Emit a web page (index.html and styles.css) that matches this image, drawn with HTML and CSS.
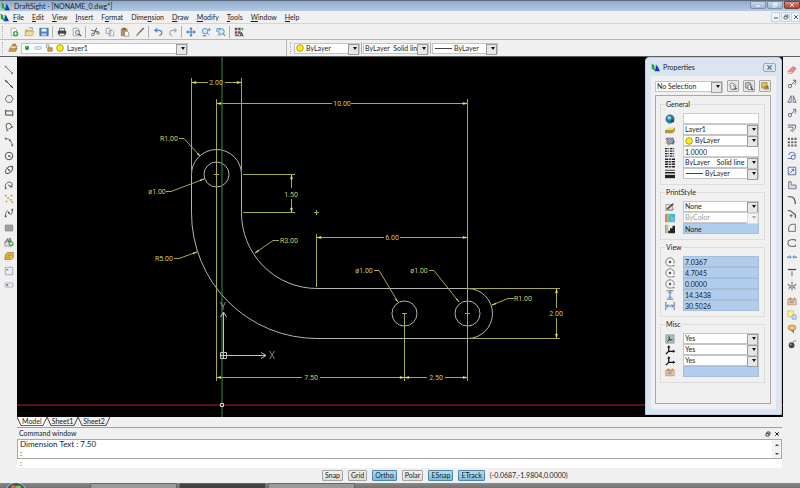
FILE: index.html
```html
<!DOCTYPE html>
<html lang="en">
<head>
<meta charset="utf-8">
<title>DraftSight - [NONAME_0.dwg*]</title>
<link rel="stylesheet" href="styles.css">
</head>
<body>
<svg class="defs" aria-hidden="true">
  <symbol id="logo" viewBox="0 0 12 12"><path d="M1 2l5 1v7l-5-2z" fill="#19c22a"/><path d="M4 1l4 10-3-1z" fill="#fff"/><path d="M7.500 2L12 11H5z" fill="#1438c4"/><path d="M1 1l5 10" stroke="#0a8418" fill="none"/></symbol>
  <symbol id="new" viewBox="0 0 12 12"><path d="M2.500 1.500h5l2 2v7h-7z" fill="#fff" stroke="#aaa"/><circle cx="8" cy="8" r="3.200" fill="#33a544"/><path d="M8 6v4M6 8h4" stroke="#fff"/></symbol>
  <symbol id="open" viewBox="0 0 12 12"><path d="M1 3h4l1 1h4v6H1z" fill="#d8b66a"/><path d="M3 5h9l-2 5.500H1z" fill="#f1db9c" stroke="#b28f43" stroke-width=".6"/><path d="M6 1h4v3" stroke="#6aa36c" fill="none"/></symbol>
  <symbol id="save" viewBox="0 0 12 12"><path d="M1 1.500h10v9H1z" fill="#4c84b8" stroke="#2e5c88" stroke-width=".8"/><path d="M3 2h6v3.500H3z" fill="#e9f2fa"/><path d="M3 7.500h6v3H3z" fill="#b9cfe2"/></symbol>
  <symbol id="print" viewBox="0 0 12 12"><path d="M3 1.500h6V5H3z" fill="#eee" stroke="#555"/><rect x="1" y="4.500" width="10" height="4.500" rx="1" fill="#444"/><path d="M3 7.500h6v3H3z" fill="#fff" stroke="#555" stroke-width=".8"/></symbol>
  <symbol id="preview" viewBox="0 0 12 12"><path d="M1.500 1.500h5l2 2v7h-7z" fill="#fff" stroke="#999"/><circle cx="6.500" cy="6.500" r="2.500" fill="#dde8ef" stroke="#666"/><path d="M8.500 8.500l2.500 2.500" stroke="#444" stroke-width="1.400"/></symbol>
  <symbol id="cut" viewBox="0 0 12 12"><path d="M8 1L5 8M1.500 4L10 6" stroke="#666" stroke-width="1.300"/><circle cx="3.500" cy="9" r="1.600" fill="none" stroke="#8b7544" stroke-width="1.200"/><circle cx="9.700" cy="7.200" r="1.500" fill="none" stroke="#8b7544" stroke-width="1.200"/></symbol>
  <symbol id="copy" viewBox="0 0 12 12"><path d="M1.500 1.500h4l1.500 1.500v5h-5.500zM5 4h4l1.500 1.500v5H5z" fill="#f7f7f7" stroke="#8c8c8c" stroke-width=".9"/></symbol>
  <symbol id="paste" viewBox="0 0 12 12"><path d="M1 2h8v9H1z" fill="#b98f4c"/><path d="M3 1h4v2H3z" fill="#665533"/><path d="M5.500 5h3l2 2v4h-5z" fill="#fff" stroke="#777" stroke-width=".8"/></symbol>
  <symbol id="brush" viewBox="0 0 12 12"><path d="M10.500 1L5 7" stroke="#6f5735" stroke-width="1.600"/><path d="M5.500 6L2 10.500" stroke="#a7946f" stroke-width="2.200"/></symbol>
  <symbol id="undo" viewBox="0 0 12 12"><path d="M3 4h4.500a3 3 0 0 1 0 6" fill="none" stroke="#4d87bf" stroke-width="1.500"/><path d="M5 1L1 4l4 3z" fill="#4d87bf"/></symbol>
  <symbol id="redo" viewBox="0 0 12 12"><path d="M9 4H5a3 3 0 0 0 0 6" fill="none" stroke="#aaa" stroke-width="1.300"/><path d="M7.500 1l3.500 3-3.500 3z" fill="#aaa"/></symbol>
  <symbol id="pan" viewBox="0 0 12 12"><path d="M6 2v8M2 6h8" stroke="#3d7ab5" stroke-width="1.200"/><path d="M6 0l2 3H4zM6 12l2-3H4zM0 6l3-2v4zM12 6L9 4v4z" fill="#3d7ab5"/></symbol>
  <symbol id="zoomd" viewBox="0 0 12 12"><circle cx="5" cy="5" r="3.300" fill="#d9ebf7" stroke="#5a94c5" stroke-width="1.200"/><path d="M7.500 7.500L10 10M10 1v4M8.500 3h3" stroke="#5a94c5" stroke-width="1.200"/><path d="M2 10.500h4" stroke="#4d4d4d"/></symbol>
  <symbol id="zoomf" viewBox="0 0 12 12"><path d="M1 2h5M1 2v4" stroke="#5a94c5" stroke-width="1.200"/><circle cx="6.500" cy="5.500" r="3.300" fill="#d9ebf7" stroke="#5a94c5" stroke-width="1.200"/><path d="M8.500 8l2.500 3M2 9.500h3" stroke="#5a94c5" stroke-width="1.300"/></symbol>
  <symbol id="propsa" viewBox="0 0 12 12"><path d="M1 1h3v3H1zM5 5h3v3H5z" fill="#8d3154"/><path d="M5 1h3v3H5zM1 5h3v3H1z" fill="#555"/><path d="M9 1h2v3H9z" fill="#3ca047"/><path d="M1 9h5v2H1z" fill="#a14a5e"/><path d="M7 11.500l2-5 2 5M8 10h2.500" stroke="#222" fill="none"/></symbol>
  <symbol id="layers" viewBox="0 0 12 12"><path d="M1 9l3-3h7l-2 4H1z" fill="#d9a441" stroke="#81602b" stroke-width=".7"/><path d="M2 6l3-2.500h6L9 7H2z" fill="#f3dfa1" stroke="#81602b" stroke-width=".7"/><path d="M4 3l2-2h4L9 4z" fill="#b67a3c"/></symbol>
  <symbol id="bulb" viewBox="0 0 12 12"><circle cx="6" cy="6" r="3.200" fill="#18a030"/><circle cx="5.200" cy="5" r="1" fill="#7fdb86"/></symbol>
  <symbol id="freeze" viewBox="0 0 12 12"><rect x="1" y="4" width="10" height="4" rx="2" fill="#e5f3fa" stroke="#74a6cc"/></symbol>
  <symbol id="lock" viewBox="0 0 12 12"><path d="M2 6V3a2 2 0 0 1 4 0v3" fill="none" stroke="#777" stroke-width="1.200"/><path d="M4 5.500h7V11H4z" fill="#d39c45" stroke="#7c5b2c" stroke-width=".7"/></symbol>
  <symbol id="dot" viewBox="0 0 12 12"><circle cx="6" cy="6" r="5" fill="#ffee0a" stroke="#777400" stroke-width="1"/></symbol>
  <symbol id="line" viewBox="0 0 12 12"><path d="M2 2l8 8" stroke="#55503f"/><path d="M1 1h2v2H1zM9 9h2v2H9z" fill="#8a7a55"/></symbol>
  <symbol id="iline" viewBox="0 0 12 12"><path d="M1 1l10 10" stroke="#222"/><path d="M2 2h2v2H2zM8 8h2v2H8z" fill="#333"/></symbol>
  <symbol id="poly" viewBox="0 0 12 12"><path d="M4 2h4.500L11 6l-2.500 4H4L1.500 6z" fill="none" stroke="#555"/></symbol>
  <symbol id="rect" viewBox="0 0 12 12"><path d="M2 3.500h8.500v5H2z" fill="none" stroke="#4d493c" stroke-width="1.200"/><path d="M1 2h2v2H1zM9 8h2v2H9z" fill="#8a7a55"/></symbol>
  <symbol id="pline" viewBox="0 0 12 12"><path d="M4 10L2.500 5a3 3 0 0 1 6-1l1 2-4 2.500" fill="none" stroke="#5b5648" stroke-width="1.200"/><path d="M3 9h2v2H3zM9 5h2v2H9z" fill="#8a7a55"/></symbol>
  <symbol id="arc" viewBox="0 0 12 12"><path d="M2 2c5 0 7 3 8 8" fill="none" stroke="#55503f"/><path d="M1 1h2v2H1zM6 3h2v2H6zM9 9h2v2H9z" fill="#6a6350"/></symbol>
  <symbol id="circle" viewBox="0 0 12 12"><circle cx="6" cy="6" r="4.500" fill="none" stroke="#555" stroke-width="1.200"/><path d="M6 6l3 2" stroke="#a44"/><path d="M5 5h2v2H5z" fill="#833"/></symbol>
  <symbol id="ellipse" viewBox="0 0 12 12"><ellipse cx="6" cy="6" rx="5.200" ry="3" transform="rotate(-45 6 6)" fill="none" stroke="#5b5648" stroke-width="1.200"/><path d="M3 3l3 3 1 2" stroke="#5b5648" fill="none"/><path d="M5 5h2v2H5zM9 1h2v2H9z" fill="#665"/></symbol>
  <symbol id="earc" viewBox="0 0 12 12"><path d="M2 10C0 5 5 1 8 3c3 1 2 4 0 5L5 6" fill="none" stroke="#5b5648" stroke-width="1.200"/><path d="M1 9h2v2H1zM7 7h3v2H7z" fill="#665"/></symbol>
  <symbol id="points" viewBox="0 0 12 12"><path d="M1 1h2v2H1zM8 1h2v2H8zM4 4h2v2H4zM2 8h2v2H2zM7 6h2v2H7zM9 9h2v2H9z" fill="#b39b3f"/></symbol>
  <symbol id="spline" viewBox="0 0 12 12"><path d="M1.500 10C3 1 5 3 6 6s4 3 4-4" fill="none" stroke="#55503f"/><path d="M1 9h2v2H1zM5 5h2v2H5zM9 1h2v2H9z" fill="#55503f"/></symbol>
  <symbol id="hatch" viewBox="0 0 12 12"><path d="M1.500 2.500h9v7h-9z" fill="#aaa" stroke="#888"/><path d="M3 9l6-6M1 8l5-5M6 9l5-5M3 3l6 6" stroke="#777" stroke-width=".5"/></symbol>
  <symbol id="block" viewBox="0 0 12 12"><path d="M1 5h8v6H1z" fill="#ddd" stroke="#999"/><path d="M2 7l2-5 2 5M6 6V2h2v4" stroke="#555" fill="none"/><circle cx="8.500" cy="8" r="3" fill="#36a344"/><path d="M8.500 6v4M6.500 8h4" stroke="#fff"/></symbol>
  <symbol id="region" viewBox="0 0 12 12"><path d="M2 4l2-2h7v6L9 10H1z" fill="#ecc04a" stroke="#94752a"/><path d="M4 5h5M3 7.500h4" stroke="#94752a"/></symbol>
  <symbol id="note" viewBox="0 0 12 12"><path d="M1.500 1.500h9v9h-9z" fill="#e9ecf2" stroke="#99a0ad"/><path d="M3 4.500h2" stroke="#333"/></symbol>
  <symbol id="snote" viewBox="0 0 12 12"><path d="M1.500 3.500h9v5h-9z" fill="#eceef2" stroke="#a5a9b0"/><path d="M3 6h2" stroke="#333" stroke-width="1.500"/></symbol>
  <symbol id="erase" viewBox="0 0 12 12"><path d="M1 8l6-6 4 2-5 6H2z" fill="#e09088" stroke="#a3564e" stroke-width=".7"/><path d="M1 8l4 .5 1 1.500H2z" fill="#f8dcd7"/></symbol>
  <symbol id="move" viewBox="0 0 12 12"><circle cx="3.500" cy="8.500" r="2" fill="none" stroke="#4a5a78"/><path d="M5 7l5-5M7 1.500h3.500V5" stroke="#4a5a78" fill="none"/><path d="M8 6h3" stroke="#889"/></symbol>
  <symbol id="mirror" viewBox="0 0 12 12"><path d="M5 2v8H1zM7.500 2v8H11z" fill="none" stroke="#5b6480"/></symbol>
  <symbol id="offset" viewBox="0 0 12 12"><path d="M1 2.500h9c1 3-1 6-4 8M1 5h6c0 2-1 4-3 5" fill="none" stroke="#4d4d55"/></symbol>
  <symbol id="pattern" viewBox="0 0 12 12"><path d="M1 1h2.500v2.500H1zM5 1h2.500v2.500H5zM9 1h2.500v2.500H9zM1 5h2.500v2.500H1zM5 5h2.500v2.500H5zM9 5h2.500v2.500H9zM1 9h2.500v2.500H1zM5 9h2.500v2.500H5zM9 9h2.500v2.500H9z" fill="#666"/></symbol>
  <symbol id="rotate" viewBox="0 0 12 12"><path d="M2 5a4 4 0 0 1 8 1" fill="none" stroke="#4a5a98"/><circle cx="7.500" cy="7.500" r="2.500" fill="none" stroke="#4a5a98"/><path d="M1 9h5" stroke="#4a5a98"/></symbol>
  <symbol id="scale" viewBox="0 0 12 12"><path d="M1.500 1.500h9v9h-9z" fill="#eef0f6" stroke="#4a5a88"/><path d="M3 9l5-5M5.500 4H8v2.500" stroke="#4a5a88" fill="none"/></symbol>
  <symbol id="stretch" viewBox="0 0 12 12"><path d="M2 2h3v4h6v4.500H2z" fill="#d9dbe4" stroke="#666c80"/></symbol>
  <symbol id="fillet" viewBox="0 0 12 12"><path d="M1 2h3c4 0 6 2 6 9" fill="none" stroke="#3d455c" stroke-width="1.300"/></symbol>
  <symbol id="chamfer" viewBox="0 0 12 12"><path d="M1 2h3l6 5v4" fill="none" stroke="#3d455c" stroke-width="1.300"/><path d="M5 6v4M3 8h4" stroke="#557"/></symbol>
  <symbol id="split" viewBox="0 0 12 12"><path d="M10 1.500H6a4.500 4.500 0 0 0-4 4.500v4h8z" fill="none" stroke="#555b6a"/></symbol>
  <symbol id="weld" viewBox="0 0 12 12"><path d="M10 4V2H5a4 4 0 0 0 0 8h5V8" fill="none" stroke="#555b6a" stroke-width="1.200"/></symbol>
  <symbol id="join" viewBox="0 0 12 12"><path d="M0 6h5M7 6h5" stroke="#4b8ac4" stroke-width="1.500"/><path d="M3 4l2 2-2 2M9 4L7 6l2 2" stroke="#4b8ac4" fill="none"/></symbol>
  <symbol id="trim" viewBox="0 0 12 12"><path d="M1 3h10" stroke="#3d455c" stroke-width="1.500"/><path d="M6 5v6" stroke="#6b7285" stroke-width="1.300"/></symbol>
  <symbol id="explode" viewBox="0 0 12 12"><path d="M6 1v3M6 8v3M1 4l3 2M8 6l3-2M2 9l3-2M7 7l3 2" stroke="#5d6e8e" stroke-width="1.400"/><circle cx="6" cy="6" r="1.500" fill="#b58b3f"/></symbol>
  <symbol id="card" viewBox="0 0 12 12"><path d="M1 4h10v6.500H1z" fill="#e8cfaa" stroke="#a98258" stroke-width=".8"/><path d="M1 4l3-2.500 3 2 2-2 2 2.500z" fill="#d08a5a"/><path d="M3 6h6M3 8h5" stroke="#8c7ba0"/></symbol>
  <symbol id="order" viewBox="0 0 12 12"><path d="M1 1h7v7H1z" fill="#fbf594" stroke="#b9b060" stroke-width=".8"/><path d="M6 6h5v5H6z" fill="#c7dcf0" stroke="#7a9abb" stroke-width=".8"/></symbol>
  <symbol id="balloon" viewBox="0 0 12 12"><ellipse cx="6" cy="4.500" rx="4.800" ry="3.300" fill="#edc06f" stroke="#97703a" stroke-width=".8"/><path d="M5 8h2l1 3" stroke="#7b6142" fill="none" stroke-width="1.400"/></symbol>
  <symbol id="bomb" viewBox="0 0 12 12"><circle cx="5.500" cy="7.500" r="3.500" fill="#44484f"/><path d="M7 4l2-2" stroke="#444"/><path d="M9 1h2v2H9z" fill="#e0a93c"/><circle cx="4.500" cy="6.500" r="1" fill="#9aa3b0"/></symbol>
  <symbol id="globe" viewBox="0 0 12 12"><circle cx="6" cy="6" r="5" fill="#2b7f9f" stroke="#195567" stroke-width=".6"/><circle cx="5" cy="4.500" r="2.200" fill="#8fdce8"/><path d="M6 9l4-3 1 4z" fill="#1b4353"/></symbol>
  <symbol id="slab" viewBox="0 0 12 12"><path d="M0 6l4-3h8L9 6z" fill="#eadb87"/><path d="M0 6h9l3-3v4L9 10H0z" fill="#ac9c3a"/></symbol>
  <symbol id="paint" viewBox="0 0 12 12"><path d="M2 5l5-3 3 6-5 2z" fill="#93a2c4" stroke="#44506e" stroke-width=".8"/><path d="M1 4l3-2M9 2l2 5-2 3" stroke="#44506e" fill="none" stroke-width="1.300"/><path d="M1 7l4 4" stroke="#bd913e" stroke-width="1.500"/></symbol>
  <symbol id="ltscale" viewBox="0 0 12 12"><path d="M0 2h12M0 5h12M0 8h12M0 11h12" stroke="#222" stroke-width="1.500" stroke-dasharray="3 1 1 1"/></symbol>
  <symbol id="ltype" viewBox="0 0 12 12"><path d="M0 1.500h12M0 4.500h12M0 7.500h12M0 10.500h12" stroke="#222" stroke-width="1.800" stroke-dasharray="4 1 2 1"/></symbol>
  <symbol id="lweight" viewBox="0 0 12 12"><path d="M0 1.500h12" stroke="#222"/><path d="M0 4.500h12" stroke="#222" stroke-width="1.800"/><path d="M0 9h12" stroke="#222" stroke-width="4"/></symbol>
  <symbol id="pstyle" viewBox="0 0 12 12"><path d="M1 3h8v7H1z" fill="#ddd" stroke="#999"/><path d="M2 9l8-7" stroke="#333" stroke-width="1.600"/><path d="M2 8l6 2 3-2" stroke="#b48245" fill="none"/></symbol>
  <symbol id="rainbow" viewBox="0 0 12 12"><path d="M0 1h3v10H0z" fill="#ef7668"/><path d="M3 1h3v10H3z" fill="#64ce73"/><path d="M6 1h6v10H6z" fill="#41b3d7"/><path d="M7 3h2v2h2v5H7z" fill="#83b7dc"/></symbol>
  <symbol id="stair" viewBox="0 0 12 12"><path d="M0 1h2v10H0z" fill="#e2866f"/><path d="M2 1h2v10H2z" fill="#9fce8a"/><path d="M4 8h2V5h3V2h3v9H4z" fill="#222"/></symbol>
  <symbol id="center" viewBox="0 0 12 12"><circle cx="6" cy="6" r="5" fill="#f8f8f6" stroke="#666"/><circle cx="6" cy="6" r="1.500" fill="#555"/><path d="M8 8h4v4H8z" fill="#eee"/><path d="M8.500 10.500h3" stroke="#555"/></symbol>
  <symbol id="height" viewBox="0 0 12 12"><path d="M2 1h8M2 11h8" stroke="#555"/><path d="M6 2v8M4 4l2-2 2 2M4 8l2 2 2-2" fill="none" stroke="#4a80b8" stroke-width="1.200"/></symbol>
  <symbol id="width" viewBox="0 0 12 12"><path d="M1 1v10M11 1v10" stroke="#557"/><path d="M2 6h8M4 4L2 6l2 2M8 4l2 2-2 2" fill="none" stroke="#4a80b8" stroke-width="1.200"/></symbol>
  <symbol id="ucson" viewBox="0 0 12 12"><path d="M1 1h10v10H1z" fill="#a9bdb9" stroke="#8aa"/><path d="M5 3v4h4M5 7L3 9" stroke="#223" fill="none" stroke-width="1.200"/></symbol>
  <symbol id="ucs" viewBox="0 0 12 12"><path d="M4.500 1v6.500h7M4.500 7.500L1 11" stroke="#111" fill="none" stroke-width="1.500"/><path d="M2.500 3l2-2.500L6.500 3zM9.500 5.500l2.500 2-2.500 2z" fill="#111"/></symbol>
  <symbol id="pick" viewBox="0 0 12 12"><path d="M1 3l3-2 5 3v6H3z" fill="#eee" stroke="#666"/><path d="M5 4l5 5M6 9h5" stroke="#444"/></symbol>
  <symbol id="pickadd" viewBox="0 0 12 12"><path d="M1 1h6v7H1z" fill="#ddd" stroke="#555"/><path d="M4 4h5v6H4z" fill="#fff" stroke="#555"/><path d="M7 6l4 5" stroke="#333" stroke-width="1.400"/></symbol>
  <symbol id="quick" viewBox="0 0 12 12"><path d="M1 1h7v7H1z" fill="#e3ca5f" stroke="#8d7830"/><path d="M4 5h6v5H4z" fill="#a98f33"/><path d="M7 4l3 5" stroke="#554"/></symbol>
  <symbol id="xmark" viewBox="0 0 12 12"><path d="M2.500 2.500l7 7M9.500 2.500l-7 7" stroke="currentColor" stroke-width="2"/></symbol>
  <symbol id="restore" viewBox="0 0 12 12"><path d="M4 5V2h6v5H8M2 5h6v5H2z" fill="none" stroke="currentColor" stroke-width="1.500"/></symbol>
  <symbol id="minus" viewBox="0 0 12 12"><path d="M2 8h8" stroke="currentColor" stroke-width="2"/></symbol>
</svg>

<div class="app">
  <header class="titlebar">
    <svg class="logo"><use href="#logo"/></svg>
    <h1>DraftSight - [NONAME_0.dwg*]</h1>
    <div class="winbtns">
      <button aria-label="Minimize"><svg><use href="#minus"/></svg></button>
      <button aria-label="Restore"><svg><use href="#restore"/></svg></button>
      <button class="close" aria-label="Close"><svg><use href="#xmark"/></svg></button>
    </div>
  </header>

  <nav class="menubar">
    <svg class="logo"><use href="#logo"/></svg>
    <a href="#"><u>F</u>ile</a><a href="#"><u>E</u>dit</a><a href="#"><u>V</u>iew</a><a href="#"><u>I</u>nsert</a><a href="#">F<u>o</u>rmat</a><a href="#">Dime<u>n</u>sion</a><a href="#"><u>D</u>raw</a><a href="#"><u>M</u>odify</a><a href="#"><u>T</u>ools</a><a href="#"><u>W</u>indow</a><a href="#"><u>H</u>elp</a>
    <div class="docbtns">
      <button aria-label="Minimize drawing"><svg><use href="#minus"/></svg></button>
      <button aria-label="Restore drawing"><svg><use href="#restore"/></svg></button>
      <button aria-label="Close drawing"><svg><use href="#xmark"/></svg></button>
    </div>
  </nav>

  <div class="toolbar">
    <i class="grip"></i>
    <button aria-label="New"><svg><use href="#new"/></svg></button>
    <button aria-label="Open"><svg><use href="#open"/></svg></button>
    <button aria-label="Save"><svg><use href="#save"/></svg></button>
    <i class="sep"></i>
    <button aria-label="Print"><svg><use href="#print"/></svg></button>
    <button aria-label="Print preview"><svg><use href="#preview"/></svg></button>
    <i class="sep"></i>
    <button aria-label="Cut"><svg><use href="#cut"/></svg></button>
    <button aria-label="Copy"><svg><use href="#copy"/></svg></button>
    <button aria-label="Paste"><svg><use href="#paste"/></svg></button>
    <button aria-label="Property painter"><svg><use href="#brush"/></svg></button>
    <i class="sep"></i>
    <button aria-label="Undo"><svg><use href="#undo"/></svg></button>
    <button aria-label="Redo"><svg><use href="#redo"/></svg></button>
    <i class="sep"></i>
    <button aria-label="Pan"><svg><use href="#pan"/></svg></button>
    <button aria-label="Zoom dynamic"><svg><use href="#zoomd"/></svg></button>
    <button aria-label="Zoom window"><svg><use href="#zoomf"/></svg></button>
    <i class="sep"></i>
    <button aria-label="Properties"><svg><use href="#propsa"/></svg></button>
  </div>

  <div class="formatbar">
    <div class="layerbar">
      <i class="grip"></i>
      <button aria-label="Layers manager"><svg><use href="#layers"/></svg></button>
      <div class="combo layer">
        <svg><use href="#bulb"/></svg><svg><use href="#freeze"/></svg><svg><use href="#lock"/></svg><svg><use href="#dot"/></svg>
        <select aria-label="Layer"><option>Layer1</option></select>
      </div>
    </div>
    <div class="stylebar">
      <i class="grip"></i>
      <div class="combo"><svg><use href="#dot"/></svg><select aria-label="Line color"><option>ByLayer</option></select></div>
      <i class="sep"></i>
      <div class="combo"><select aria-label="Line style"><option>ByLayer&nbsp;&nbsp;Solid line</option></select></div>
      <i class="sep"></i>
      <div class="combo"><i class="rule"></i><select aria-label="Line weight"><option>ByLayer</option></select></div>
    </div>
  </div>

  <div class="workspace">
    <aside class="tools draw">
      <button aria-label="Line"><svg><use href="#line"/></svg></button>
      <button aria-label="Infinite line"><svg><use href="#iline"/></svg></button>
      <button aria-label="Polygon"><svg><use href="#poly"/></svg></button>
      <button aria-label="Rectangle"><svg><use href="#rect"/></svg></button>
      <button aria-label="Polyline"><svg><use href="#pline"/></svg></button>
      <button aria-label="Arc"><svg><use href="#arc"/></svg></button>
      <button aria-label="Circle"><svg><use href="#circle"/></svg></button>
      <button aria-label="Ellipse"><svg><use href="#ellipse"/></svg></button>
      <button aria-label="Elliptical arc"><svg><use href="#earc"/></svg></button>
      <button aria-label="Point"><svg><use href="#points"/></svg></button>
      <button aria-label="Spline"><svg><use href="#spline"/></svg></button>
      <button aria-label="Hatch"><svg><use href="#hatch"/></svg></button>
      <button aria-label="Insert block"><svg><use href="#block"/></svg></button>
      <button aria-label="Region"><svg><use href="#region"/></svg></button>
      <button aria-label="Note"><svg><use href="#note"/></svg></button>
      <button aria-label="Simple note"><svg><use href="#snote"/></svg></button>
    </aside>

    <main class="center">
      <div class="canvas">
        <svg class="drawing" viewBox="17 57 766 360" role="img" aria-label="Bracket drawing">
          <path class="shape" d="M191.500 212.500V174.500A25 25 0 0 1 241.500 174.500V212.500A75.500 75.500 0 0 0 317 288.500H467.500A25 25 0 0 1 467.500 338.500H317A125.500 125.500 0 0 1 191.500 212.500"/>
          <circle class="shape" cx="216.500" cy="174.500" r="12.500"/><circle class="shape" cx="404.500" cy="313.500" r="12.500"/><circle class="shape" cx="467.500" cy="313.500" r="12.500"/>
          <path class="dim" d="M191.500 78V171M241.500 78V171M192 82.500H208M225 82.500H241M216.500 99V381M467.500 99V381M217 103.500H332M351 103.500H467M243 174.500H295M243 212.500H295M291.500 175V188M291.500 199V212M316.500 234V287M317 237.500H384M400 237.500H467M404.500 313V381M217 377.500H302M320 377.500H404M405 377.500H427M445 377.500H467M470 288.500H560M470 338.500H560M556.500 289V308M556.500 318V338"/>
          <path class="dim" d="M179 138.500H184L200 156M166 191.500H171L204 179M174 258.500H179L197 252M279 240.500H273L255 253M374 270.500H379L398 302M429 270.500H434L459 302M514 298.500H508L492 305"/>
          <path class="dim" d="M214 174.500h5M314 212.500h5M316.500 210v5M402 313.500h5M465 313.500h5"/>
          <path class="tips" d="M192 82.500l4-1v2zM241 82.500l-4-1v2zM217 103.500l4-1v2zM467 103.500l-4-1v2zM317 237.500l4-1v2zM467 237.500l-4-1v2zM217 377.500l4-1v2zM404 377.500l-4-1v2zM405 377.500l4-1v2zM467 377.500l-4-1v2zM291.500 175l-1 4h2zM291.500 212l-1-4h2zM556.500 289l-1 4h2zM556.500 338l-1-4h2zM200 156l-3-2 1-1zM204 179l-4 1v1zM197 252l-4 1v1zM255 253l3-3 1 1zM398 302l-3-3h1zM459 302l-3-3h1zM492 305l4-2v1z"/>
          <path class="axis-y" d="M222 57V417"/><path class="axis-x" d="M17 405H783"/>
          <path class="cursor" d="M220.500 403.500h3v3h-3z"/>
          <path class="ucs" d="M220.500 352.500h6v6h-6zM223.500 358V313M220.500 317l3-5 3 5M220 355.500H266M261 352.500l5 3-5 3"/>
          <g class="dimtext">
            <text x="216" y="85">2.00</text><text x="342" y="106">10.00</text><text x="169" y="141">R1.00</text><text x="157" y="194">ø1.00</text><text x="291" y="197">1.50</text><text x="164" y="261">R5.00</text><text x="289" y="243">R3.00</text><text x="392" y="240">6.00</text><text x="364" y="273">ø1.00</text><text x="419" y="273">ø1.00</text><text x="523" y="301">R1.00</text><text x="556" y="316">2.00</text><text x="311" y="380">7.50</text><text x="436" y="380">2.50</text>
          </g>
          <g class="ucstext"><text x="223" y="310">Y</text><text x="272" y="359">X</text></g>
        </svg>

        <section class="palette">
          <header>
            <svg class="logo"><use href="#logo"/></svg>
            <h2>Properties</h2>
            <button aria-label="Close properties"><svg><use href="#xmark"/></svg></button>
          </header>
          <div class="palette-body">
            <div class="selection">
              <div class="combo"><select aria-label="Selection"><option>No Selection</option></select></div>
              <button aria-label="Select entities"><svg><use href="#pick"/></svg></button>
              <button aria-label="Add to selection"><svg><use href="#pickadd"/></svg></button>
              <button aria-label="Smart select"><svg><use href="#quick"/></svg></button>
            </div>
            <div class="groups">
              <fieldset><legend>General</legend>
                <div class="row"><svg><use href="#globe"/></svg><input aria-label="Hyperlink" type="text"></div>
                <div class="row"><svg><use href="#slab"/></svg><div class="combo"><select aria-label="Layer name"><option>Layer1</option></select></div></div>
                <div class="row"><svg><use href="#paint"/></svg><div class="combo"><svg><use href="#dot"/></svg><select aria-label="Color"><option>ByLayer</option></select></div></div>
                <div class="row"><svg><use href="#ltscale"/></svg><input aria-label="Line scale" type="text" value="1.0000"></div>
                <div class="row"><svg><use href="#ltype"/></svg><div class="combo"><select aria-label="Line type"><option>ByLayer&nbsp;&nbsp;&nbsp;&nbsp;Solid line</option></select></div></div>
                <div class="row"><svg><use href="#lweight"/></svg><div class="combo"><i class="rule"></i><select aria-label="Weight"><option>ByLayer</option></select></div></div>
              </fieldset>
              <fieldset><legend>PrintStyle</legend>
                <div class="row"><svg><use href="#pstyle"/></svg><div class="combo"><select aria-label="Print style"><option>None</option></select></div></div>
                <div class="row"><svg><use href="#rainbow"/></svg><div class="combo off"><select aria-label="Print color" disabled><option>ByColor</option></select></div></div>
                <div class="row"><svg><use href="#stair"/></svg><input aria-label="Print table" type="text" value="None" readonly></div>
              </fieldset>
              <fieldset><legend>View</legend>
                <div class="row"><svg><use href="#center"/></svg><input aria-label="Center X" type="text" value="7.0367" readonly></div>
                <div class="row"><svg><use href="#center"/></svg><input aria-label="Center Y" type="text" value="4.7045" readonly></div>
                <div class="row"><svg><use href="#center"/></svg><input aria-label="Center Z" type="text" value="0.0000" readonly></div>
                <div class="row"><svg><use href="#height"/></svg><input aria-label="Height" type="text" value="14.3438" readonly></div>
                <div class="row"><svg><use href="#width"/></svg><input aria-label="Width" type="text" value="30.5026" readonly></div>
              </fieldset>
              <fieldset><legend>Misc</legend>
                <div class="row"><svg><use href="#ucson"/></svg><div class="combo"><select aria-label="Coordinate icon on"><option>Yes</option></select></div></div>
                <div class="row"><svg><use href="#ucs"/></svg><div class="combo"><select aria-label="Coordinate icon at origin"><option>Yes</option></select></div></div>
                <div class="row"><svg><use href="#ucs"/></svg><div class="combo"><select aria-label="Coordinate system per view"><option>Yes</option></select></div></div>
                <div class="row"><svg><use href="#card"/></svg><input aria-label="Coordinate system name" type="text" readonly></div>
              </fieldset>
            </div>
          </div>
        </section>
      </div>

      <div class="tabs">
        <button class="tab active"><svg viewBox="0 0 5 9"><path d="M0 0l4 8.500h1"/></svg><span>Model</span><svg viewBox="0 0 5 9"><path d="M0 8.500h1L5 0"/></svg></button>
        <button class="tab"><svg viewBox="0 0 5 9"><path d="M0 0l4 8.500h1"/></svg><span>Sheet1</span><svg viewBox="0 0 5 9"><path d="M0 8.500h1L5 0"/></svg></button>
        <button class="tab"><svg viewBox="0 0 5 9"><path d="M0 0l4 8.500h1"/></svg><span>Sheet2</span><svg viewBox="0 0 5 9"><path d="M0 8.500h1L5 0"/></svg></button>
      </div>

      <section class="command">
        <header>
          <h2>Command window</h2>
          <button aria-label="Float"><svg><use href="#restore"/></svg></button>
          <button aria-label="Close command window"><svg><use href="#xmark"/></svg></button>
        </header>
        <div class="history">
          <div class="log"><p>Dimension Text : 7.50</p><p>:</p></div>
          <div class="scroll"><i class="up"></i><i class="down"></i></div>
        </div>
        <input class="prompt" aria-label="Command" type="text" value=":">
      </section>
    </main>

    <aside class="tools modify">
      <button aria-label="Delete"><svg><use href="#erase"/></svg></button>
      <button aria-label="Copy entity"><svg><use href="#move"/></svg></button>
      <button aria-label="Mirror"><svg><use href="#mirror"/></svg></button>
      <button aria-label="Move"><svg><use href="#move"/></svg></button>
      <button aria-label="Offset"><svg><use href="#offset"/></svg></button>
      <button aria-label="Pattern"><svg><use href="#pattern"/></svg></button>
      <button aria-label="Rotate"><svg><use href="#rotate"/></svg></button>
      <button aria-label="Scale"><svg><use href="#scale"/></svg></button>
      <button aria-label="Stretch"><svg><use href="#stretch"/></svg></button>
      <button aria-label="Fillet"><svg><use href="#fillet"/></svg></button>
      <button aria-label="Chamfer"><svg><use href="#chamfer"/></svg></button>
      <button aria-label="Split"><svg><use href="#split"/></svg></button>
      <button aria-label="Split at point"><svg><use href="#weld"/></svg></button>
      <button aria-label="Weld"><svg><use href="#join"/></svg></button>
      <button aria-label="Trim"><svg><use href="#trim"/></svg></button>
      <button aria-label="Explode"><svg><use href="#explode"/></svg></button>
      <button aria-label="Edit properties"><svg><use href="#card"/></svg></button>
      <button aria-label="Display order"><svg><use href="#order"/></svg></button>
      <button aria-label="Edit annotation"><svg><use href="#balloon"/></svg></button>
      <button aria-label="Discard"><svg><use href="#bomb"/></svg></button>
    </aside>
  </div>

  <footer class="status">
    <button>Snap</button><button>Grid</button><button class="on">Ortho</button><button>Polar</button><button class="on">ESnap</button><button class="on">ETrack</button>
    <output>(-0.0687,-1.9804,0.0000)</output>
  </footer>
  <div class="taskbar">
    <svg class="orb" viewBox="0 0 22 6"><circle cx="11" cy="10" r="10.500" fill="#34586b" stroke="#a9c6d3"/><path d="M6 3q2-2 5 0v3H6z" fill="#e0642c"/><path d="M11 3q3-1 5 0v3h-5z" fill="#87b84a"/></svg>
    <i class="task"></i><i class="task current"></i><i class="task"></i>
  </div>
</div>
</body>
</html>
```
FILE: styles.css
```css
* { box-sizing: border-box; }
body, h1, h2, p, fieldset, legend { margin: 0; padding: 0; font-size: inherit; font-weight: normal; }
body {
  background: #f0f0f0;
  color: #1c1c1c;
  font: 7px/9px "Lato", "Open Sans", sans-serif;
}
.defs { display: none; }
button, input, select { margin: 0; padding: 0; border: 0; background: none; color: inherit; font: inherit; }
button { display: flex; align-items: center; justify-content: center; flex: none; }
svg { flex: none; display: block; }
a { color: inherit; text-decoration: none; }

.app { display: flex; flex-direction: column; min-height: 100vh; }

.titlebar {
  display: flex; align-items: center; gap: 4px;
  height: 11px; padding: 0 0 0 1px;
  border-top: 1px solid #5a6a7a;
  background: linear-gradient(#8eaacb, #b4cae4);
}
.logo { width: 9px; height: 9px; }
.titlebar h1 { flex: 1; font-size: 7px; }
.winbtns { display: flex; gap: 1px; align-self: flex-start; }
.winbtns button { width: 16px; height: 8px; border: 1px solid #7b8fab; border-radius: 0 0 2px 2px; background: linear-gradient(#c9d8ea, #9fb5d2); color: #fff; }
.winbtns .close { background: linear-gradient(#dd9080, #bd3a28); border-color: #7d4138; }
.winbtns svg, .docbtns svg { width: 6px; height: 6px; }

.menubar { display: flex; align-items: center; gap: 8px; height: 12px; }
.menubar .logo { margin-right: -4px; }
.docbtns { display: flex; gap: 1px; margin-left: auto; }
.docbtns button { width: 9px; height: 10px; border: 1px solid #c3d4e0; background: #eef6fb; color: #456; }

.toolbar { display: flex; align-items: center; gap: 2px; height: 17px; padding-left: 2px; border-top: 1px solid #d4d4d4; border-bottom: 1px solid #b4b8b8; }
.toolbar button { width: 13px; height: 13px; }
.toolbar button svg { width: 10px; height: 10px; }
.grip { width: 3px; height: 12px; border-left: 1px dotted #b0b0b0; flex: none; }
.sep { width: 1px; height: 12px; background: #b0b0b0; flex: none; }

.formatbar { display: flex; height: 17px; border-bottom: 1px solid #5d5d5d; }
.layerbar { display: flex; align-items: center; gap: 3px; flex: 0 1 287px; padding-left: 2px; border-right: 1px solid #b4b8b8; }
.layerbar svg { width: 10px; height: 10px; }
.stylebar { display: flex; align-items: center; gap: 1px; flex: 1; padding-left: 3px; }
.stylebar .combo { width: 66px; }

.combo { position: relative; display: flex; align-items: center; gap: 2px; height: 11px; padding-left: 1px; border: 1px solid #c4c4c4; background: #fff; }
.combo select { flex: 1; min-width: 0; height: 9px; appearance: none; }
.combo::after {
  content: ""; position: absolute; top: 0; right: 0; width: 9px; height: 9px;
  border: 1px solid #9b9b9b;
  background: #e6e6e6;
  pointer-events: none;
}
.combo::before {
  content: ""; position: absolute; z-index: 1; top: 3px; right: 2px;
  border: solid transparent; border-width: 3px 2px 0; border-top-color: #111;
  pointer-events: none;
}
.combo svg { width: 8px; height: 8px; }
.combo.off { color: #999; border-color: #ccc; }
.combo.off::after { border-color: #ddd; background: #f4f4f4; }
.combo.off::before { border-top-color: #aaa; }
.combo select:disabled { opacity: 1; color: #999; }
.layer { width: 167px; gap: 3px; }
.rule { flex: none; width: 17px; height: 1px; margin-left: 1px; background: #444; }

.workspace { display: flex; flex: 1; }
.tools { display: flex; flex-direction: column; align-items: center; justify-content: space-between; flex: none; width: 17px; padding-top: 7px; }
.tools button { width: 12px; height: 12px; }
.tools svg { width: 10px; height: 10px; }
.draw { height: 234px; }
.modify { height: 293px; }
.center { display: flex; flex-direction: column; flex: 1; min-width: 0; }

.canvas { position: relative; background: #000; }
.drawing { width: 100%; height: auto; }
.drawing path, .drawing circle { fill: none; stroke-width: 1; }
.shape { stroke: #b4b4b4; }
.dim { stroke: #a8a850; }
.drawing .tips { fill: #e6e67a; stroke: #d6d66c; stroke-width: .5; }
.axis-y { stroke: #3c8c40; }
.drawing .axis-x { stroke: #5c1016; stroke-width: 2; }
.cursor { stroke: #ddc; }
.ucs { stroke: #c4c4c4; }
.dimtext { fill: #cccc66; font: 7px "Roboto", sans-serif; text-anchor: middle; }
.ucstext { fill: #b8b8b8; font: 10px "Roboto", sans-serif; font-weight: 300; text-anchor: middle; }

.palette { position: absolute; top: 0; right: 1px; width: 137px; padding: 0 5px 5px; border: 1px solid #c3ced9; border-radius: 4px 4px 0 0; background: #dae5f1; }
.palette header { display: flex; align-items: center; gap: 3px; height: 18px; }
.palette header h2 { flex: 1; }
.palette header button { width: 13px; height: 9px; border: 1px solid #9aa9b8; border-radius: 2px; color: #567; }
.palette header button svg { width: 7px; height: 7px; }
.palette-body { padding: 4px 5px 5px 4px; background: #f0f0f0; }
.selection { display: flex; align-items: center; gap: 4px; margin-bottom: 3px; }
.selection .combo { flex: 1; }
.selection button { width: 12px; height: 12px; border: 1px solid #a8a8a8; border-radius: 1px; background: #e8e8e8; }
.selection button svg { width: 9px; height: 9px; }
.groups { padding: 4px 5px 17px 4px; border: 1px solid #a8a8a8; }
fieldset { min-width: 0; margin-bottom: 3px; padding: 5px 5px 5px 4px; border: 1px solid #dcdcdc; }
legend { height: 8px; line-height: 8px; padding: 0 1px; }
.row { display: flex; align-items: center; gap: 8px; height: 11px; }
.row > svg { width: 10px; height: 10px; }
.row > input, .row > .combo { flex: 1; min-width: 0; height: 11px; }
.row > input { padding: 0 1px; border: 1px solid #ccc; background: #fff; }
.row > input:read-only { border-color: #a9bdd4; background: #b0cdee; }

.tabs { display: flex; height: 10px; }
.tab { align-items: stretch; height: 9px; line-height: 8px; }
.tab svg { width: 5px; height: 9px; fill: none; stroke: #444; stroke-width: 1; }
.tab span { border-bottom: 1px solid #666; }
.active { background: #fff; }

.command { border-top: 1px solid #a0a0a0; margin-right: 1px; }
.command header { display: flex; align-items: center; gap: 1px; height: 11px; padding: 0 1px 0 2px; }
.command header h2 { flex: 1; }
.command header button { width: 8px; height: 8px; }
.command header svg { width: 6px; height: 6px; }
.history { display: flex; height: 20px; border: 1px solid #a8a8a8; background: #fff; }
.log { flex: 1; padding-left: 2px; font: 8px/9px "Lato", Arial, sans-serif; }
.scroll { display: flex; flex-direction: column; justify-content: space-around; align-items: center; width: 9px; background: #f2f2f2; }
.up, .down { border: solid transparent; border-width: 0 2px 2px; border-bottom-color: #444; }
.down { transform: rotate(180deg); }
.prompt { display: block; width: 100%; height: 9px; padding-left: 3px; background: #fff; }

.status { display: flex; align-items: center; gap: 5px; height: 15px; padding-left: calc(40% + 2px); }
.status button { height: 11px; padding: 0 2px; border: 1px solid #a4a4a4; border-radius: 1px; background: linear-gradient(#f2f2f2, #dcdcdc); }
.status .on { border-color: #4d87a8; background: linear-gradient(#b4dcf0, #7cbcdc); }
.taskbar { display: flex; gap: 2px; height: 5px; overflow: hidden; padding-left: 5px; background: linear-gradient(#8a8a8a, #727272); }
.orb { width: 22px; height: 6px; margin-right: 61px; }
.task { width: 87px; border: 1px solid #666; border-bottom: 0; border-radius: 2px 2px 0 0; background: #9a9a9a; }
.current { background: #444; }
```
